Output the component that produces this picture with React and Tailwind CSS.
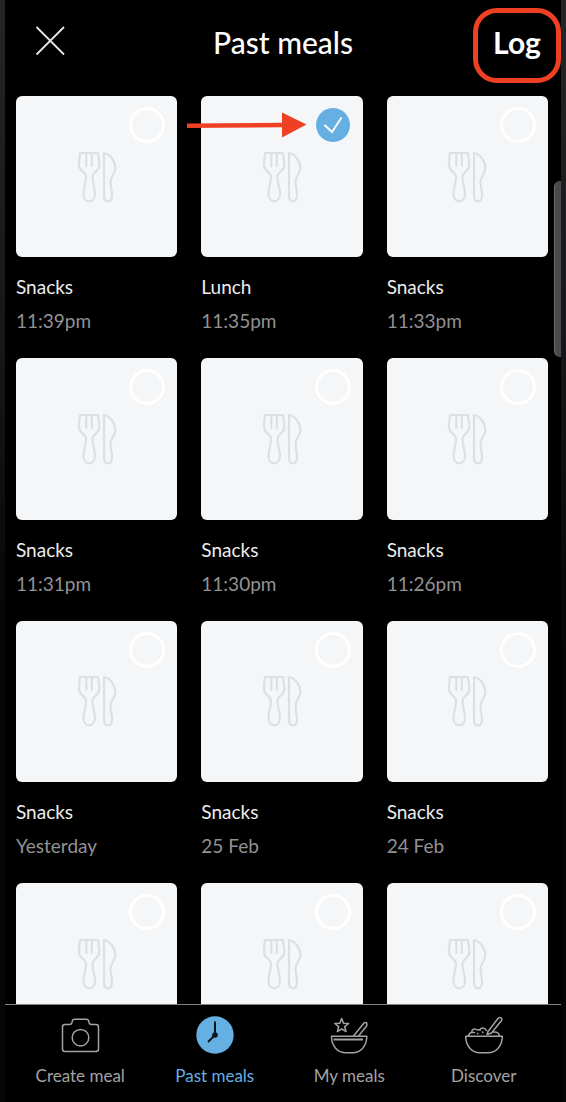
import React, { useState } from "react";

const initialMeals = [
  { id: 1, name: "Snacks", time: "11:39pm" },
  { id: 2, name: "Lunch", time: "11:35pm", hint: true },
  { id: 3, name: "Snacks", time: "11:33pm" },
  { id: 4, name: "Snacks", time: "11:31pm" },
  { id: 5, name: "Snacks", time: "11:30pm" },
  { id: 6, name: "Snacks", time: "11:26pm" },
  { id: 7, name: "Snacks", time: "Yesterday" },
  { id: 8, name: "Snacks", time: "25 Feb" },
  { id: 9, name: "Snacks", time: "24 Feb" },
  { id: 10, name: "", time: "" },
  { id: 11, name: "", time: "" },
  { id: 12, name: "", time: "" },
];

function CutleryIcon() {
  return (
    <svg viewBox="0 0 40 52" className="w-10 h-[52px] text-[#dde0e3]" fill="none" stroke="currentColor" strokeWidth="2.2" strokeLinejoin="round" strokeLinecap="round" aria-hidden="true">
      <path d="M3 2H21C21.5 6 22.300 10 22.300 14C22.300 21 15.500 20 15.500 26C15.500 32 18 37 18 43C18 47.5 15.500 50.300 12.200 50.300C9 50.300 6.500 47.5 6.500 43C6.500 37 9 32 9 26C9 20 2 21 2 14C2 10 2.500 6 3 2Z" />
      <path d="M9.300 2V15M14.800 2V15" />
      <path d="M27 2C33 3 38.300 10 38.300 17C38.300 23 33.500 25 33.500 31C33.500 36 35 39 35 44C35 48 33.500 50.300 31 50.300C28 50.300 27 48 27 45Z" />
    </svg>
  );
}

function CameraIcon() {
  return (
    <svg viewBox="0 0 40 40" className="size-10" fill="none" stroke="currentColor" strokeWidth="1.5" strokeLinejoin="round" aria-hidden="true">
      <path d="M5 8.500H9.500Q11.500 8.500 12 6.500L12.300 5Q12.800 3.200 14.500 3.200H26.500Q28.200 3.200 28.700 5L29 6.500Q29.500 8.500 31.500 8.500H36Q38.500 8.500 38.500 11V33Q38.500 35.500 36 35.500H5Q2.500 35.500 2.500 33V11Q2.500 8.500 5 8.500Z" />
      <circle cx="20.500" cy="21.700" r="8.300" />
    </svg>
  );
}

function ClockIcon() {
  return (
    <svg viewBox="0 0 40 40" className="size-10" fill="none" aria-hidden="true">
      <circle cx="20" cy="19" r="18.700" fill="currentColor" />
      <path d="M20 19V5.500M20 19L13 26" stroke="#0b1622" strokeWidth="2" />
      <circle cx="20" cy="19" r="2.800" fill="#0b1622" />
    </svg>
  );
}

function StarBowlIcon() {
  return (
    <svg viewBox="0 0 40 40" className="size-10" fill="none" stroke="currentColor" strokeWidth="1.500" strokeLinejoin="round" aria-hidden="true">
      <path d="M12.700 2.500L14.500 7.200L19.600 7.500L15.700 10.700L17 15.600L12.700 12.900L8.400 15.600L9.700 10.700L5.800 7.500L10.900 7.200Z" />
      <path d="M24.500 20L34.800 7.200Q36.300 5.800 37.800 7V9.800L29.500 20" />
      <path d="M2.500 20.300H37.800C37.800 30 31.500 36.700 23.500 36.700H17C8.500 36.700 2.500 30 2.500 20.300Z" />
      <path d="M4.500 23.500H34" strokeWidth="2" />
    </svg>
  );
}

function FoodBowlIcon() {
  return (
    <svg viewBox="0 0 40 40" className="size-10" fill="none" stroke="currentColor" strokeWidth="1.500" strokeLinejoin="round" strokeLinecap="round" aria-hidden="true">
      <path d="M4.500 20C5 17.500 6.500 16.500 8 16C7.500 13.500 10 12.500 12 13.500L16 14C16.500 11.500 20.500 11 22.500 14.500M8.500 16.500H10.500M13.500 17.500H14M18.500 16L19 16.500M29.500 16C32.500 15.500 35 17 35.500 20" />
      <path d="M24 15.500L34 2.500Q35.500 .8 37.200 2Q38.500 3.300 37.200 5L27.500 17L23 18.500Z" />
      <path d="M1.700 20.300H38.300C38.300 30 32 36.700 24 36.700H16C8 36.700 1.700 30 1.700 20.300Z" />
    </svg>
  );
}

const tabs = [
  { id: "create", label: "Create meal", Icon: CameraIcon },
  { id: "past", label: "Past meals", Icon: ClockIcon },
  { id: "mine", label: "My meals", Icon: StarBowlIcon },
  { id: "discover", label: "Discover", Icon: FoodBowlIcon },
];

function MealCard({ meal, checked, onToggle }) {
  return (
    <label className="relative block cursor-pointer">
      <div className="relative aspect-square rounded-md bg-[#f5f6f8] flex items-center justify-center">
        <CutleryIcon />
        <input
          type="checkbox"
          checked={checked}
          onChange={onToggle}
          className="peer absolute top-[11px] right-3 size-9 appearance-none rounded-full border-3 border-white checked:border checked:bg-[#65afe3] cursor-pointer"
        />
        <svg viewBox="0 0 36 36" className="hidden peer-checked:block absolute top-[11px] right-3 size-9 pointer-events-none" fill="none" stroke="white" strokeWidth="1.800" aria-hidden="true">
          <path d="M9.500 18L17 25L26.500 10.500" />
        </svg>
      </div>
      {meal.hint && (
        <svg viewBox="0 0 120 26" className="absolute top-4 -left-3.5 w-[120px] h-[26px] pointer-events-none" aria-hidden="true">
          <path d="M0 13.800L96 13" stroke="#ee4023" strokeWidth="4.500" />
          <path d="M95 .5L119.500 12.500L95 25.500Z" fill="#ee4023" />
        </svg>
      )}
      <p className="mt-[18px] h-6 text-[19px] leading-6 text-[#ececec]">{meal.name}</p>
      <p className="mt-[10px] h-6 text-[19px] leading-6 text-[#929292]">{meal.time}</p>
    </label>
  );
}

function App() {
  const [selected, setSelected] = useState([2]);
  const [activeTab, setActiveTab] = useState("past");

  const toggleMeal = (id) => {
    setSelected(selected.includes(id) ? selected.filter((s) => s !== id) : [...selected, id]);
  };

  return (
    <div className="h-screen px-[5px] bg-linear-to-b from-[#242527] via-[#141516] via-35% to-[#050505] to-60% font-[Lato,sans-serif]">
      <div className="h-full flex flex-col relative bg-black">
        <header className="shrink-0 grid grid-cols-[1fr_auto_1fr] pt-2 pb-[13px]">
          <button type="button" aria-label="Close" className="ml-[30px] mt-[17px] size-8 text-[#e6e6e6] cursor-pointer">
            <svg viewBox="0 0 32 32" fill="none" stroke="currentColor" strokeWidth="1.800" aria-hidden="true">
              <path d="M1.500 2L29 29.500M29 2L1.500 29.500" />
            </svg>
          </button>
          <h1 className="mt-4 text-[30px] leading-9 font-medium text-white">Past meals</h1>
          <button type="button" className="justify-self-end w-[88px] h-[75px] pb-2 rounded-3xl border-5 border-[#ee4023] text-[30px] leading-9 font-bold text-white cursor-pointer">
            Log
          </button>
        </header>

        <main className="flex-1 min-h-0 overflow-hidden pl-[11px] pr-[13px]">
          <div className="grid grid-cols-3 gap-x-6 gap-y-[25px]">
            {initialMeals.map((meal) => (
              <MealCard key={meal.id} meal={meal} checked={selected.includes(meal.id)} onToggle={() => toggleMeal(meal.id)} />
            ))}
          </div>
        </main>

        <div className="absolute right-0 top-[181px] w-[7px] h-44 rounded-l-md border-l border-[#6b6b6d] bg-[#4a4a4c]" />

        <nav className="shrink-0 grid grid-cols-4 pl-2 pr-[10px] pt-[11px] pb-[14px] border-t border-[#858585]">
          {tabs.map(({ id, label, Icon }) => (
            <button
              key={id}
              type="button"
              onClick={() => setActiveTab(id)}
              className={`flex flex-col items-center gap-2 cursor-pointer ${activeTab === id ? "text-[#65afe3]" : "text-[#a3a3a3]"}`}
            >
              <Icon />
              <span className="text-[17px] leading-6">{label}</span>
            </button>
          ))}
        </nav>
      </div>
    </div>
  );
}

export default App;
